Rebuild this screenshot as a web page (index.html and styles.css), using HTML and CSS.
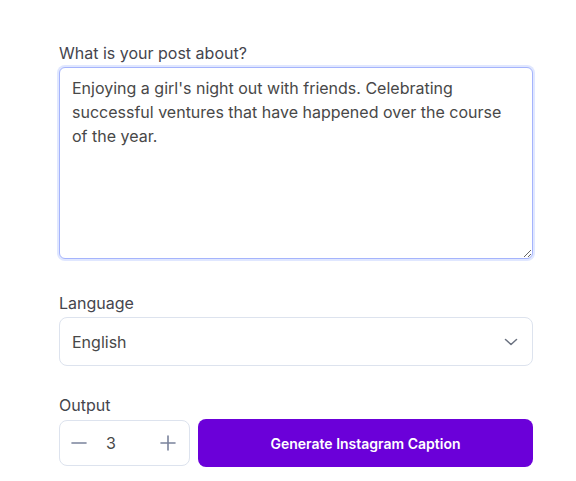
FILE: index.html
```html
<!DOCTYPE html>
<html>
	<head>
		<meta charset="utf-8" />
		<title>Instagram Caption Generator</title>
		<link rel="stylesheet" href="styles.css">
	</head>
	<body>
	<form class="caption-form">
		<label class="field-label" for="topic">What is your post about?</label>
		<textarea id="topic" class="topic-input">Enjoying a girl's night out with friends. Celebrating successful ventures that have happened over the course of the year.</textarea>

		<label class="field-label language-label" for="language">Language</label>
		<div class="select-box">
			<span class="select-value">English</span>
			<svg class="chevron" width="16" height="16" viewBox="0 0 16 16">
				<path d="M2.5 5.5 L8 10.5 L13.5 5.5" fill="none" stroke="#6b7280" stroke-width="1.5" stroke-linecap="round" stroke-linejoin="round"/>
			</svg>
		</div>

		<label class="field-label output-label">Output</label>
		<div class="output-row">
			<div class="stepper">
				<button type="button" class="step-btn">
					<svg width="16" height="16" viewBox="0 0 16 16"><path d="M1 8 H15" stroke="#7a839c" stroke-width="1.6" stroke-linecap="round"/></svg>
				</button>
				<span class="step-value">3</span>
				<button type="button" class="step-btn">
					<svg width="16" height="16" viewBox="0 0 16 16"><path d="M1 8 H15 M8 1 V15" stroke="#7a839c" stroke-width="1.6" stroke-linecap="round"/></svg>
				</button>
			</div>
			<button type="button" class="generate-btn">Generate Instagram Caption</button>
		</div>
	</form>
	</body>
</html>
```

FILE: styles.css
```css
body{
	margin: 0;
	background-color: #ffffff;
	font-family: Inter, "Noto Sans", sans-serif;
}
.caption-form{
	width: 474px;
	margin-left: 59px;
	padding-top: 43px;
	display: flex;
	flex-direction: column;
}
.field-label{
	font-size: 16px;
	line-height: 20px;
	color: #45454d;
	margin-bottom: 4px;
}
.topic-input{
	box-sizing: border-box;
	width: 474px;
	height: 192px;
	margin: 0;
	padding: 8px 12px;
	border: 1px solid #a5b4fc;
	border-radius: 6px;
	box-shadow: 0 0 0 2px #e0e7ff;
	outline: none;
	resize: vertical;
	font-family: Inter, "Noto Sans", sans-serif;
	font-size: 16px;
	line-height: 24px;
	color: #484848;
}
.language-label{
	margin-top: 34px;
}
.select-box{
	box-sizing: border-box;
	height: 49px;
	padding: 0 13px 0 12px;
	border: 1px solid #dde3ee;
	border-radius: 8px;
	display: flex;
	align-items: center;
	justify-content: space-between;
}
.select-value{
	font-size: 16px;
	color: #484848;
}
.output-label{
	margin-top: 29px;
	margin-bottom: 4px;
}
.output-row{
	display: flex;
	gap: 8px;
	align-items: center;
}
.stepper{
	box-sizing: border-box;
	width: 131px;
	height: 46px;
	border: 1px solid #dde3ee;
	border-radius: 8px;
	display: flex;
	align-items: center;
	padding: 0 12px 0 10px;
}
.step-btn{
	border: none;
	background: none;
	padding: 0;
	width: 18px;
	height: 18px;
	display: flex;
	align-items: center;
	justify-content: center;
}
.step-value{
	flex: 1;
	font-size: 16px;
	color: #484848;
	padding-left: 18px;
}
.generate-btn{
	flex: 1;
	height: 48px;
	border: none;
	border-radius: 8px;
	background-color: #6b00d9;
	color: #ffffff;
	font-family: Inter, "Noto Sans", sans-serif;
	font-size: 14px;
	font-weight: 600;
}
```
